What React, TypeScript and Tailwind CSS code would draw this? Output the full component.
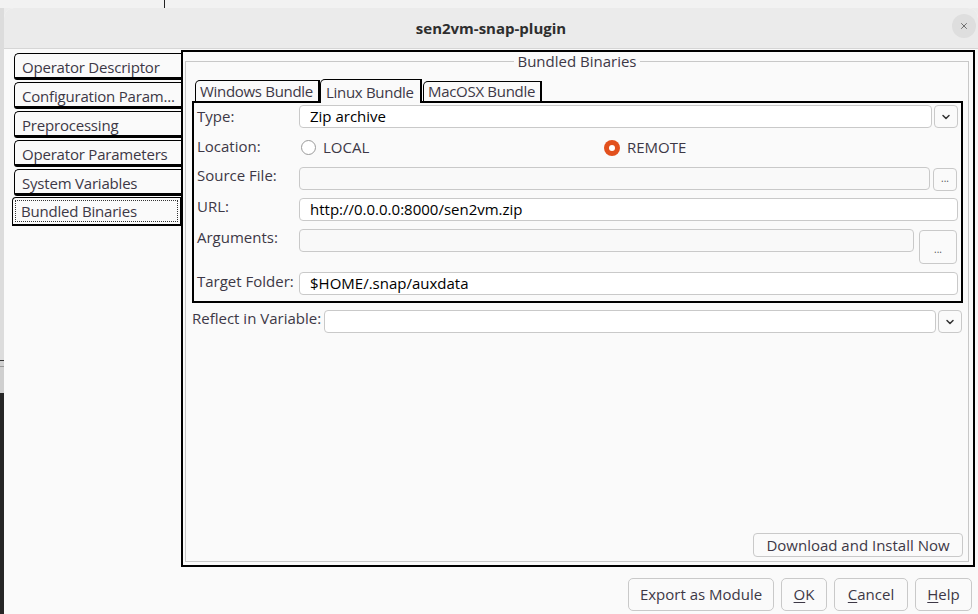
import { ChevronDown, X } from 'lucide-react';

const font = { fontFamily: '"Open Sans", "Noto Sans", sans-serif' };

const sideTabs = [
  'Operator Descriptor',
  'Configuration Param...',
  'Preprocessing',
  'Operator Parameters',
  'System Variables',
];

function Field({ value, dim, className = '' }: { value?: string; dim?: boolean; className?: string }) {
  return (
    <div
      className={`h-[23px] rounded-[4px] border border-[#c9c9c9] flex items-center pl-[10px] text-[15px] text-black ${
        dim ? 'bg-[#f9f9f9]' : 'bg-white'
      } ${className}`}
    >
      {value}
    </div>
  );
}

function DotsButton({ tall }: { tall?: boolean }) {
  return (
    <div
      className={`${tall ? 'h-[34px] w-[38px] pt-[12px]' : 'h-[23px] w-[24px] pt-[3px]'} rounded-[4px] border border-[#c9c9c9] bg-[#fafafa] flex justify-center text-[10px] text-[#555] leading-[12px]`}
    >
      ...
    </div>
  );
}

function ComboButton() {
  return (
    <div className="w-[24px] h-[23px] rounded-[4px] border border-[#c9c9c9] bg-[#fafafa] flex items-center justify-center">
      <ChevronDown className="w-[12px] h-[12px] text-[#333]" strokeWidth={3} />
    </div>
  );
}

function Label({ text, extra = '' }: { text: string; extra?: string }) {
  return <div className={`w-[102px] shrink-0 text-[15px] leading-[16px] text-[#3d3846] whitespace-nowrap ${extra}`}>{text}</div>;
}

export default function App() {
  return (
    <div className="w-[978px] h-[614px] bg-[#ececec] flex flex-col overflow-hidden" style={font}>
      {/* desktop strip above the dialog */}
      <div className="h-[8px] shrink-0 pl-[164px] bg-[#f2f2f2]">
        <div className="w-px h-full bg-[#222]" />
      </div>

      <div className="flex-1 flex min-h-0">
        {/* desktop behind, left side */}
        <div className="w-[4px] shrink-0 flex flex-col">
          <div className="h-[352px] bg-[#dcdcdc]" />
          <div className="h-px bg-[#333]" />
          <div className="h-[5px] bg-[#d0d0d0]" />
          <div className="h-px bg-[#999]" />
          <div className="h-[26px] bg-[#cfcfcf]" />
          <div className="flex-1 bg-[#262626]" />
        </div>

        {/* dialog */}
        <div className="flex-1 flex flex-col bg-[#fafafa] rounded-t-[10px] overflow-hidden">
          <div className="h-[41px] shrink-0 bg-[#ebebeb] border-b border-[#d6d6d6] flex items-center justify-center relative">
            <span className="text-[15px] font-bold text-[#2e2e2e]">sen2vm-snap-plugin</span>
            <div className="absolute right-[2px] top-[6px] w-[24px] h-[24px] rounded-full bg-[#dedede] flex items-center justify-center">
              <X className="w-[10px] h-[10px] text-[#444]" strokeWidth={1.75} />
            </div>
          </div>

          <div className="flex-1 flex flex-col">
            <div className="flex pl-[8px] pt-px">
              {/* side tabs */}
              <div className="w-[169px] pt-[3px] flex flex-col gap-[2px]">
                {sideTabs.map((t) => (
                  <div
                    key={t}
                    className="ml-[2px] h-[27px] border-l border-t border-b-[3px] border-black rounded-tl-[5px] rounded-bl-[3px] bg-[#fafafa] pl-[7px] pt-[3px] flex items-center text-[15px] tracking-[-0.2px] text-[#3d3846] whitespace-nowrap overflow-hidden"
                  >
                    {t}
                  </div>
                ))}
                <div className="h-[29px] -mt-px border border-b-2 border-black rounded-tl-[4px] bg-[#fafafa] p-[2px]">
                  <div className="h-full border border-dotted border-[#333] pl-[5px] flex items-center text-[15px] tracking-[-0.2px] text-[#3d3846]">
                    Bundled Binaries
                  </div>
                </div>
              </div>

              {/* content panel */}
              <div className="w-[794px] h-[517px] border-2 border-black pl-[2px] pr-[4px] pt-[9px] pb-[3px]">
                <div className="h-full border border-[#c8c8c8] relative flex flex-col">
                  <div className="absolute -top-[10px] left-0 right-0 flex justify-center">
                    <span className="bg-[#fafafa] px-[3px] text-[15px] leading-[18px] text-[#3d3846]">Bundled Binaries</span>
                  </div>

                  {/* inner tabs */}
                  <div className="mt-[15px] pl-[9px] flex items-end h-[24px]">
                    <div className="h-[21px] w-[125px] border-l border-t border-r-2 border-black rounded-tl-[5px] pl-[4px] text-[15px] tracking-[-0.3px] leading-[20px] text-[#3d3846] whitespace-nowrap overflow-hidden">
                      Windows Bundle
                    </div>
                    <div className="h-[24px] w-[102px] border-l border-t border-r-2 border-black rounded-tl-[5px] bg-[#fafafa] pl-[5px] text-[15px] tracking-[-0.3px] leading-[24px] text-[#3d3846] whitespace-nowrap overflow-hidden relative -mb-[2px] z-10">
                      Linux Bundle
                    </div>
                    <div className="h-[20px] w-[119px] ml-[1px] border-l border-t border-r-2 border-black rounded-tl-[5px] pl-[4px] text-[15px] tracking-[-0.3px] leading-[19px] text-[#3d3846] whitespace-nowrap overflow-hidden">
                      MacOSX Bundle
                    </div>
                  </div>

                  <div className="ml-[6px] mr-[5px] border-2 border-black px-[3px] pt-[2px] pb-[6px] flex flex-col">
                    <div className="flex h-[23px] items-start">
                      <Label text="Type:" extra="pt-[3px]" />
                      <Field value="Zip archive" className="flex-1" />
                      <div className="ml-[2px]"><ComboButton /></div>
                    </div>
                    <div className="flex h-[23px] mt-[8px] items-center">
                      <Label text="Location:" extra="-mt-[4px]" />
                      <div className="w-[305px] flex items-center gap-[7px] pl-[2px]">
                        <div className="w-[15px] h-[15px] rounded-full border border-[#9a9a9a] bg-white" />
                        <span className="text-[15px] text-[#3d3846]">LOCAL</span>
                      </div>
                      <div className="flex items-center gap-[7px]">
                        <div className="w-[16px] h-[16px] rounded-full bg-[#e2501d] flex items-center justify-center">
                          <div className="w-[6px] h-[6px] rounded-full bg-white" />
                        </div>
                        <span className="text-[15px] text-[#3d3846]">REMOTE</span>
                      </div>
                    </div>
                    <div className="flex h-[23px] mt-[8px] items-start">
                      <Label text="Source File:" />
                      <Field dim className="flex-1" />
                      <div className="ml-[3px] mr-px mt-px"><DotsButton /></div>
                    </div>
                    <div className="flex h-[23px] mt-[8px] items-start">
                      <Label text="URL:" />
                      <Field value="http://0.0.0.0:8000/sen2vm.zip" className="flex-1" />
                    </div>
                    <div className="flex h-[34px] mt-[8px] items-start">
                      <Label text="Arguments:" />
                      <Field dim className="flex-1" />
                      <div className="ml-[5px] mr-px mt-px"><DotsButton tall /></div>
                    </div>
                    <div className="flex h-[23px] mt-[9px] items-start">
                      <Label text="Target Folder:" extra="pt-px" />
                      <Field value="$HOME/.snap/auxdata" className="flex-1" />
                    </div>
                  </div>

                  <div className="flex items-start mt-[7px] ml-[6px] mr-[6px] h-[23px]">
                    <div className="w-[132px] shrink-0 text-[15px] leading-[16px] text-[#3d3846] whitespace-nowrap">Reflect in Variable:</div>
                    <Field className="flex-1" />
                    <div className="ml-[2px]"><ComboButton /></div>
                  </div>

                  <div className="flex-1" />
                  <div className="flex justify-end mr-[5px] mb-[4px]">
                    <div className="h-[24px] w-[210px] rounded-[4px] border border-[#c9c9c9] bg-[#fafafa] flex items-center justify-center text-[15px] text-[#3d3846]">
                      Download and Install Now
                    </div>
                  </div>
                </div>
              </div>
            </div>

            {/* bottom buttons */}
            <div className="flex justify-end gap-[7px] pr-[6px] mt-[11px]">
              <div className="h-[33px] w-[146px] rounded-[5px] border border-[#c9c9c9] bg-[#fafafa] flex items-center justify-center text-[15px] text-[#3d3846]">
                Export as Module
              </div>
              <div className="h-[33px] w-[46px] rounded-[5px] border border-[#c9c9c9] bg-[#fafafa] flex items-center justify-center text-[15px] text-[#3d3846]">
                <span><span className="underline underline-offset-2">O</span>K</span>
              </div>
              <div className="h-[33px] w-[74px] rounded-[5px] border border-[#c9c9c9] bg-[#fafafa] flex items-center justify-center text-[15px] text-[#3d3846]">
                <span><span className="underline underline-offset-2">C</span>ancel</span>
              </div>
              <div className="h-[33px] w-[57px] rounded-[5px] border border-[#c9c9c9] bg-[#fafafa] flex items-center justify-center text-[15px] text-[#3d3846]">
                <span><span className="underline underline-offset-2">H</span>elp</span>
              </div>
            </div>
          </div>
        </div>
      </div>
    </div>
  );
}
